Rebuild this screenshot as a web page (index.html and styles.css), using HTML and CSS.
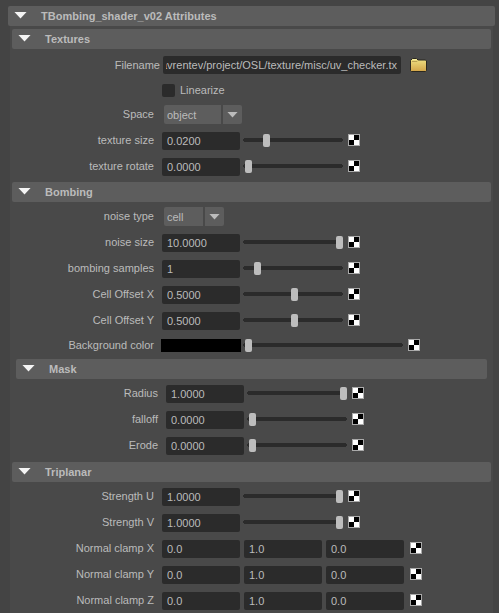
FILE: index.html
```html
<!DOCTYPE html>
<html lang="en">
<head>
<meta charset="utf-8">
<meta name="viewport" content="width=device-width, initial-scale=1">
<title>TBombing_shader_v02 Attributes</title>
<link rel="stylesheet" href="styles.css">
</head>
<body>
<details class="editor" open>
  <summary class="bar">TBombing_shader_v02 Attributes</summary>
  <div class="panel">

    <details class="section" open>
      <summary class="bar">Textures</summary>
      <div class="rows rows--menu">
        <div class="row row--file">
          <label class="name" for="filename">Filename</label>
          <input class="field field--path" id="filename" type="text" value="avrentev/project/OSL/texture/misc/uv_checker.tx">
          <button class="browse" type="button" aria-label="Browse">
            <svg width="17" height="14" viewBox="0 0 17 14" aria-hidden="true">
              <defs>
                <linearGradient id="folder" x1="0" y1="0" x2="0" y2="1">
                  <stop offset="0" stop-color="#f0e386"/>
                  <stop offset="1" stop-color="#d3a548"/>
                </linearGradient>
              </defs>
              <path d="M.5 2.5 2.5.5h4l1.500 1.500h7.500l1 1v9.500l-1 1H1.500l-1-1z" fill="url(#folder)" stroke="#2b2820"/>
              <path d="M2 3.500h5L8 2.500" fill="none" stroke="#b9a052"/>
              <path d="M2.500 1.500h4" stroke="#f7f0a4"/>
            </svg>
          </button>
        </div>
        <div class="row row--short row--check">
          <input class="tick" id="linearize" type="checkbox">
          <label for="linearize">Linearize</label>
        </div>
        <div class="row row--short">
          <label class="name" for="space">Space</label>
          <span class="menu"><select id="space"><option>object</option></select></span>
        </div>
        <div class="row">
          <label class="name" for="tex-size">texture size</label>
          <input class="field" id="tex-size" type="text" value="0.0200">
          <input class="slider" type="range" min="0" max="0.1" step="0.001" value="0.02" aria-label="texture size">
          <button class="map" type="button" aria-label="Map texture size"></button>
        </div>
        <div class="row">
          <label class="name" for="tex-rotate">texture rotate</label>
          <input class="field" id="tex-rotate" type="text" value="0.0000">
          <input class="slider" type="range" min="0" max="1" step="0.01" value="0" aria-label="texture rotate">
          <button class="map" type="button" aria-label="Map texture rotate"></button>
        </div>
      </div>
    </details>

    <details class="section" open>
      <summary class="bar">Bombing</summary>
      <div class="rows rows--menu">
        <div class="row row--short">
          <label class="name" for="noise-type">noise type</label>
          <span class="menu menu--small"><select id="noise-type"><option>cell</option></select></span>
        </div>
        <div class="row">
          <label class="name" for="noise-size">noise size</label>
          <input class="field" id="noise-size" type="text" value="10.0000">
          <input class="slider" type="range" min="0" max="10" step="0.1" value="10" aria-label="noise size">
          <button class="map" type="button" aria-label="Map noise size"></button>
        </div>
        <div class="row">
          <label class="name" for="samples">bombing samples</label>
          <input class="field" id="samples" type="text" value="1">
          <input class="slider" type="range" min="0" max="10" value="1" aria-label="bombing samples">
          <button class="map" type="button" aria-label="Map bombing samples"></button>
        </div>
        <div class="row">
          <label class="name" for="offset-x">Cell Offset X</label>
          <input class="field" id="offset-x" type="text" value="0.5000">
          <input class="slider" type="range" min="0" max="1" step="0.01" value="0.5" aria-label="Cell Offset X">
          <button class="map" type="button" aria-label="Map Cell Offset X"></button>
        </div>
        <div class="row">
          <label class="name" for="offset-y">Cell Offset Y</label>
          <input class="field" id="offset-y" type="text" value="0.5000">
          <input class="slider" type="range" min="0" max="1" step="0.01" value="0.5" aria-label="Cell Offset Y">
          <button class="map" type="button" aria-label="Map Cell Offset Y"></button>
        </div>
        <div class="row row--color">
          <label class="name" for="background">Background color</label>
          <input class="swatch" id="background" type="color" value="#000000">
          <input class="slider slider--long" type="range" min="0" max="1" step="0.01" value="0" aria-label="Background color value">
          <button class="map" type="button" aria-label="Map Background color"></button>
        </div>
      </div>

      <details class="section section--nested" open>
        <summary class="bar">Mask</summary>
        <div class="rows">
          <div class="row">
            <label class="name" for="radius">Radius</label>
            <input class="field" id="radius" type="text" value="1.0000">
            <input class="slider" type="range" min="0" max="1" step="0.01" value="1" aria-label="Radius">
            <button class="map" type="button" aria-label="Map Radius"></button>
          </div>
          <div class="row">
            <label class="name" for="falloff">falloff</label>
            <input class="field" id="falloff" type="text" value="0.0000">
            <input class="slider" type="range" min="0" max="1" step="0.01" value="0" aria-label="falloff">
            <button class="map" type="button" aria-label="Map falloff"></button>
          </div>
          <div class="row">
            <label class="name" for="erode">Erode</label>
            <input class="field" id="erode" type="text" value="0.0000">
            <input class="slider" type="range" min="0" max="1" step="0.01" value="0" aria-label="Erode">
            <button class="map" type="button" aria-label="Map Erode"></button>
          </div>
        </div>
      </details>
    </details>

    <details class="section" open>
      <summary class="bar">Triplanar</summary>
      <div class="rows">
        <div class="row">
          <label class="name" for="strength-u">Strength U</label>
          <input class="field" id="strength-u" type="text" value="1.0000">
          <input class="slider" type="range" min="0" max="1" step="0.01" value="1" aria-label="Strength U">
          <button class="map" type="button" aria-label="Map Strength U"></button>
        </div>
        <div class="row">
          <label class="name" for="strength-v">Strength V</label>
          <input class="field" id="strength-v" type="text" value="1.0000">
          <input class="slider" type="range" min="0" max="1" step="0.01" value="1" aria-label="Strength V">
          <button class="map" type="button" aria-label="Map Strength V"></button>
        </div>
        <div class="row">
          <label class="name" for="clamp-x">Normal clamp X</label>
          <div class="triple">
            <input class="field" id="clamp-x" type="text" value="0.0">
            <input class="field" type="text" value="1.0" aria-label="Normal clamp X, second value">
            <input class="field" type="text" value="0.0" aria-label="Normal clamp X, third value">
          </div>
          <button class="map" type="button" aria-label="Map Normal clamp X"></button>
        </div>
        <div class="row">
          <label class="name" for="clamp-y">Normal clamp Y</label>
          <div class="triple">
            <input class="field" id="clamp-y" type="text" value="0.0">
            <input class="field" type="text" value="1.0" aria-label="Normal clamp Y, second value">
            <input class="field" type="text" value="0.0" aria-label="Normal clamp Y, third value">
          </div>
          <button class="map" type="button" aria-label="Map Normal clamp Y"></button>
        </div>
        <div class="row">
          <label class="name" for="clamp-z">Normal clamp Z</label>
          <div class="triple">
            <input class="field" id="clamp-z" type="text" value="0.0">
            <input class="field" type="text" value="1.0" aria-label="Normal clamp Z, second value">
            <input class="field" type="text" value="0.0" aria-label="Normal clamp Z, third value">
          </div>
          <button class="map" type="button" aria-label="Map Normal clamp Z"></button>
        </div>
      </div>
    </details>

  </div>
</details>
</body>
</html>
```
FILE: styles.css
```css
:root {
  --window: #444;
  --panel: #494949;
  --bar: #5d5d5d;
  --well: #2b2b2b;
  --text: #bbb;
  scrollbar-width: none;
}

* {
  box-sizing: border-box;
}

body {
  margin: 0;
  background: var(--window);
  color: var(--text);
  font: 11px/14px "Liberation Sans", Arial, sans-serif;
}

input,
select,
button {
  margin: 0;
  padding: 0;
  border: 0;
  color: inherit;
  font: inherit;
  appearance: none;
}

.editor {
  padding: 6px 4px 0 8px;
}

.bar {
  display: flex;
  align-items: center;
  height: 20px;
  padding-left: 6px;
  border-radius: 2px;
  background: var(--bar);
  font-weight: bold;
  list-style: none;
}

.bar::before {
  content: "";
  width: 13px;
  height: 7px;
  margin: 0 14px 2px 0;
  background: #f4f4f4;
  clip-path: polygon(0 0, 100% 0, 50% 100%);
}

.panel {
  min-height: calc(100vh - 26px);
  margin: 0 2px;
  padding: 3px 2px 0;
  background: var(--panel);
}

.section--nested {
  margin: 0 4px;
}

/* Attribute rows */

.rows {
  padding: 2px 0 3px;
}

.rows--menu {
  padding: 3px 0 2px;
}

.row {
  display: flex;
  align-items: center;
  height: 26px;
}

.row--short {
  height: 25px;
  padding-bottom: 2px;
}

.row--color {
  height: 23px;
}

.row--check {
  gap: 5px;
  padding: 0 0 0 150px;
}

.row--check label {
  margin-bottom: 2px;
}

.name {
  width: 142px;
  margin: 0 8px 2px 0;
  text-align: right;
  white-space: nowrap;
}

.row--file .name {
  width: 148px;
  margin: 0 3px 0 0;
}

.row--color .name {
  margin-right: 7px;
}

.field {
  width: 78px;
  height: 18px;
  padding: 0 5px;
  border-radius: 2px;
  background: var(--well);
}

/* Long paths stay scrolled to the file name */
.field--path {
  width: 238px;
  padding: 0 4px 0 3px;
  direction: rtl;
}

.triple {
  display: flex;
  gap: 4px;
  margin-right: 1px;
}

.browse {
  display: flex;
  margin-left: 9px;
  background: none;
}

.tick {
  width: 13px;
  height: 13px;
  border-radius: 2px;
  background: var(--well);
}

.tick:checked {
  box-shadow: inset 0 0 0 3px var(--well);
  background: var(--text);
}

/* Drop-down with a separate arrow cell */
.menu {
  display: flex;
  align-items: center;
  width: 78px;
  height: 19px;
  margin-left: 2px;
  border-radius: 2px;
  background: linear-gradient(var(--panel), var(--panel)) right 19px top / 2px 100% no-repeat var(--bar);
}

.menu--small {
  width: 60px;
}

.menu select {
  flex: 1;
  height: 19px;
  padding: 1px 0 0 3px;
  background: none;
}

.menu::after {
  content: "";
  width: 11px;
  height: 6px;
  margin: 0 4px 0 -15px;
  background: var(--text);
  clip-path: polygon(0 0, 100% 0, 50% 100%);
  pointer-events: none;
}

.slider {
  width: 100px;
  height: 13px;
  margin: 0 0 1px 3px;
  padding-left: 2px;
  background:
    linear-gradient(var(--well), var(--well)) center 4px / calc(100% - 2px) 4px no-repeat,
    linear-gradient(var(--well), var(--well)) center 5px / 100% 2px no-repeat;
}

.slider--long {
  width: 160px;
}

.slider::-webkit-slider-thumb {
  appearance: none;
  width: 7px;
  height: 13px;
  border-radius: 2px;
  background: #bdbdbd;
}

.swatch {
  width: 80px;
  height: 13px;
  background: #000;
}

.swatch::-webkit-color-swatch-wrapper {
  padding: 0;
}

.swatch::-webkit-color-swatch {
  border: 0;
}

.row--color .slider {
  margin: 0 0 0 2px;
}

.map {
  width: 12px;
  height: 12px;
  margin: 0 0 2px 5px;
  border: 1px solid #aaa;
  background: conic-gradient(#000 25%, #fff 0 50%, #000 0 75%, #fff 0);
}

.row--color .map {
  margin-bottom: 1px;
}
```
